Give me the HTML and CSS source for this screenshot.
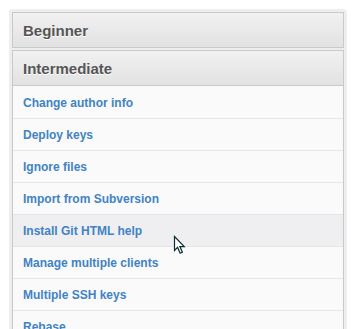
FILE: index.html
```html
<!DOCTYPE html>
<html lang="en">
<head>
  <meta charset="UTF-8" />
  <title>Help topics</title>
  <link rel="stylesheet" href="styles.css">
</head>
<body>
  <div class="panel">
    <div class="section">
      <div class="section-head">Beginner</div>
    </div>
    <div class="section">
      <div class="section-head">Intermediate</div>
      <ul class="topics">
        <li><a href="#">Change author info</a></li>
        <li><a href="#">Deploy keys</a></li>
        <li><a href="#">Ignore files</a></li>
        <li><a href="#">Import from Subversion</a></li>
        <li class="hover">
          <a href="#">Install Git HTML help</a>
          <svg class="cursor" width="13" height="20" viewBox="0 0 13 20">
            <path d="M1.5 1.5 L1.5 15.5 L4.6 12.4 L7.2 18.3 L9.4 17.3 L6.9 11.6 L11.3 11.6 Z" fill="#fff" stroke="#0b2b33" stroke-width="1.2" stroke-linejoin="miter"/>
          </svg>
        </li>
        <li><a href="#">Manage multiple clients</a></li>
        <li><a href="#">Multiple SSH keys</a></li>
        <li><a href="#">Rebase</a></li>
      </ul>
    </div>
  </div>
</body>
</html>
```

FILE: styles.css
```css
body {
  margin: 0;
  padding: 0;
  background: #fff;
  font-family: "Liberation Sans", Arial, sans-serif;
  overflow: hidden;
}
.panel {
  margin: 9px 0 0 9px;
  width: 338px;
  padding: 3px 3px 0;
  box-sizing: border-box;
  background: #eeeeee;
  border-radius: 4px 4px 0 0;
}
.section + .section {
  margin-top: 2px;
}
.section-head {
  height: 36px;
  box-sizing: border-box;
  display: flex;
  align-items: center;
  padding-left: 10px;
  border: 1px solid #c9c9c9;
  background: linear-gradient(#f1f1f1, #e2e2e2);
  color: #555;
  font-size: 15px;
  font-weight: bold;
  text-shadow: 0 1px 0 #fff;
}
.topics {
  list-style: none;
  margin: 0;
  padding: 1px 0 0;
  border-left: 1px solid #c9c9c9;
  border-right: 1px solid #c9c9c9;
  background: #fafafa;
}
.topics li {
  position: relative;
  height: 32px;
  box-sizing: border-box;
  display: flex;
  align-items: center;
  padding-left: 10px;
  border-bottom: 1px solid #e6e6e6;
}
.topics li.hover {
  background: #efeff1;
}
.topics a {
  color: #4183c4;
  font-size: 12px;
  font-weight: bold;
  text-decoration: none;
}
.cursor {
  position: absolute;
  left: 160px;
  top: 20px;
  z-index: 1;
}
```
